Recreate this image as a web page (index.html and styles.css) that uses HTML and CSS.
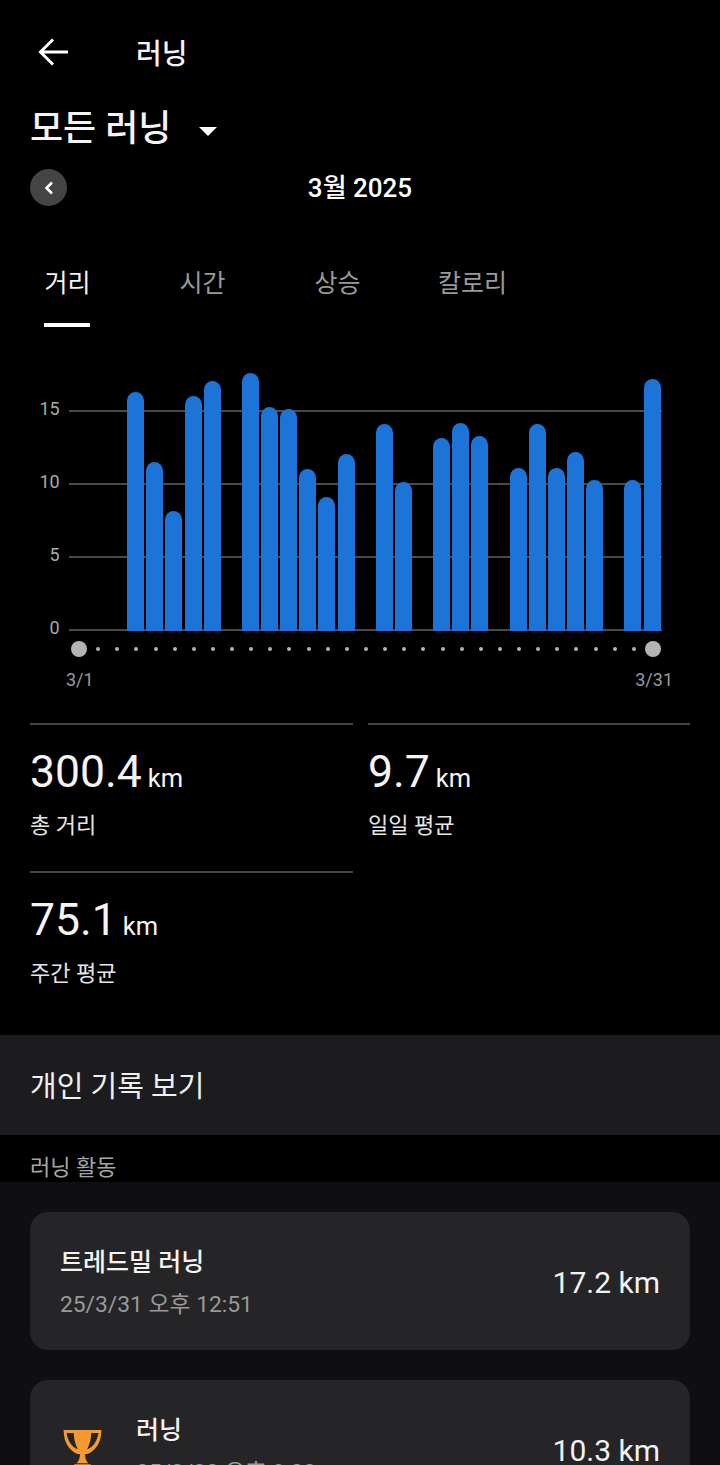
FILE: index.html
```html
<!DOCTYPE html>
<html lang="ko">
<head>
<meta charset="utf-8">
<title>러닝</title>
<link rel="stylesheet" href="styles.css">
</head>
<body>
<div class="screen">
  <header class="appbar">
    <svg class="back" viewBox="0 0 32 32" width="32" height="32"><path d="M32 16H4.500M17 3.500 4.500 16 17 28.500" fill="none" stroke="#fff" stroke-width="3"/></svg>
    <h1 class="appbar-title">러닝</h1>
  </header>
  <div class="filter">
    <span class="filter-text">모든 러닝</span>
    <span class="caret"></span>
  </div>
  <div class="date-row">
    <span class="prev"><svg viewBox="0 0 12 16" width="12" height="16"><path d="M9 2.500 3.500 8 9 13.500" fill="none" stroke="#fff" stroke-width="2.600"/></svg></span>
    <span class="date">3월 2025</span>
  </div>
  <nav class="tabs">
    <span class="tab active">거리</span>
    <span class="tab">시간</span>
    <span class="tab">상승</span>
    <span class="tab">칼로리</span>
  </nav>

  <section class="chart">
    <div class="plot">
      <div class="gridlines">
        <div class="gl"><span>15</span></div>
        <div class="gl"><span>10</span></div>
        <div class="gl"><span>5</span></div>
        <div class="gl"><span>0</span></div>
      </div>
      <div class="bars">
        <i></i><i></i><i></i>
        <b style="height:239px"></b>
        <b style="height:169px"></b>
        <b style="height:120px"></b>
        <b style="height:235px"></b>
        <b style="height:250px"></b>
        <i></i>
        <b style="height:258px"></b>
        <b style="height:224px"></b>
        <b style="height:222px"></b>
        <b style="height:162px"></b>
        <b style="height:134px"></b>
        <b style="height:177px"></b>
        <i></i>
        <b style="height:207px"></b>
        <b style="height:149px"></b>
        <i></i>
        <b style="height:193px"></b>
        <b style="height:208px"></b>
        <b style="height:195px"></b>
        <i></i>
        <b style="height:163px"></b>
        <b style="height:207px"></b>
        <b style="height:163px"></b>
        <b style="height:179px"></b>
        <b style="height:151px"></b>
        <i></i>
        <b style="height:151px"></b>
        <b style="height:252px"></b>
      </div>
    </div>
    <div class="dots">
      <u class="big"></u><u></u><u></u><u></u><u></u><u></u><u></u><u></u><u></u><u></u><u></u><u></u><u></u><u></u><u></u><u></u><u></u><u></u><u></u><u></u><u></u><u></u><u></u><u></u><u></u><u></u><u></u><u></u><u></u><u></u><u class="big"></u>
    </div>
    <div class="range"><span>3/1</span><span>3/31</span></div>
  </section>

  <section class="stats">
    <div class="stat">
      <div class="stat-value"><span class="num">300.4</span><span class="unit">km</span></div>
      <div class="stat-label">총 거리</div>
    </div>
    <div class="stat">
      <div class="stat-value"><span class="num">9.7</span><span class="unit">km</span></div>
      <div class="stat-label">일일 평균</div>
    </div>
    <div class="stat">
      <div class="stat-value"><span class="num">75.1</span><span class="unit">km</span></div>
      <div class="stat-label">주간 평균</div>
    </div>
  </section>

  <div class="records">개인 기록 보기</div>
  <div class="section-title">러닝 활동</div>

  <section class="list">
    <article class="card">
      <div class="card-main">
        <div class="card-title">트레드밀 러닝</div>
        <div class="card-sub">25/3/31 오후 12:51</div>
      </div>
      <div class="card-value">17.2 km</div>
    </article>
    <article class="card">
      <svg class="trophy" viewBox="0 0 38 40" width="39" height="41">
        <path d="M.5 1h37l-.5 5C36 15 31 21 24 24.500H14C7 21 2 15 1 6z" fill="#f59a33"/>
        <path d="M3.500 3.800h7c0 6 1.500 11 4 16C8 17 4.500 11 3.500 3.800zM34.500 3.800h-7c0 6-1.500 11-4 16C30 17 33.500 11 34.500 3.800z" fill="#252527"/>
        <path d="M16.500 24h5c0 5 1 7.500 3.500 9.500H13c2.500-2 3.500-4.500 3.500-9.500zM11 34.500h16V40H11z" fill="#f59a33"/>
      </svg>
      <div class="card-main">
        <div class="card-title">러닝</div>
        <div class="card-sub">25/3/30 오후 9:00</div>
      </div>
      <div class="card-value">10.3 km</div>
    </article>
  </section>
</div>
</body>
</html>
```
FILE: styles.css
```css
* { box-sizing: border-box; }
html, body { margin: 0; padding: 0; background: #000; }
body { font-family: Roboto, "Noto Sans CJK KR", sans-serif; color: #fff; }
.screen { width: 720px; height: 1465px; overflow: hidden; background: #000; }

.appbar { height: 104px; display: flex; align-items: center; padding: 0 0 0 36px; gap: 68px; }
.back { display: block; }
.appbar-title { margin: 0; padding-top: 6px; font-size: 28px; line-height: 36px; font-weight: 500; color: #f4f4f4; }

.filter { height: 46px; display: flex; align-items: center; padding-left: 30px; }
.filter-text { padding-top: 4px; font-size: 36px; line-height: 46px; font-weight: 500; color: #f4f4f4; }
.caret { margin-left: 28px; margin-top: 8px; width: 0; height: 0; border-left: 9px solid transparent; border-right: 9px solid transparent; border-top: 9px solid #fff; }

.date-row { margin-top: 19px; height: 37px; padding-left: 30px; display: flex; align-items: center; position: relative; }
.prev { width: 37px; height: 37px; border-radius: 50%; background: #444; display: flex; align-items: center; justify-content: center; }
.date { position: absolute; left: 0; right: 0; padding-top: 1px; text-align: center; font-size: 26px; font-weight: 500; line-height: 37px; }

.tabs { margin-top: 53px; display: grid; grid-template-columns: repeat(4, 135px); height: 68px; }
.tab { text-align: center; font-size: 25px; line-height: 46px; color: #9a9a9a; padding-top: 2px; position: relative; }
.tab.active { color: #f4f4f4; }
.tab.active::after { content: ""; position: absolute; left: 44px; width: 46px; bottom: 0; height: 4px; background: #fff; }

.chart { margin-top: 46px; }
.plot { position: relative; height: 258px; margin-left: 68.700px; width: 593px; }
.gridlines { position: absolute; left: 0; right: 0; bottom: 0; height: 221px; display: flex; flex-direction: column; justify-content: space-between; }
.gl { height: 2px; background: #4a4a4a; position: relative; }
.gl span { position: absolute; right: 100%; margin-right: 9px; top: -13px; font-size: 18px; line-height: 24px; color: #aaa; }
.bars { position: absolute; inset: 0; display: grid; grid-template-columns: repeat(31, 1fr); align-items: end; }
.bars b { display: block; width: 17px; justify-self: center; background: #1c74d9; border-radius: 9px 9px 0 0; }
.dots { margin: 9px 0 0 69.500px; width: 593px; height: 18px; display: grid; grid-template-columns: repeat(31, 1fr); align-items: center; justify-items: center; }
.dots u { display: block; width: 4px; height: 4px; border-radius: 50%; background: #b4b4b4; }
.dots u.big { width: 16px; height: 16px; }
.range { margin-top: 10px; display: flex; justify-content: space-between; padding: 0 47px 0 66px; font-size: 18px; line-height: 24px; color: #999; }

.stats { margin-top: 31px; padding: 0 30px; display: grid; grid-template-columns: 323px 322px; column-gap: 15px; grid-auto-rows: 148px; }
.stat { border-top: 2px solid #444; padding-top: 17px; }
.stat-value { display: flex; align-items: baseline; height: 60px; line-height: 60px; color: #f4f4f4; }
.num { font-size: 44.500px; font-weight: 400; }
.unit { font-size: 25.500px; margin-left: 6px; }
.stat-label { margin-top: 9px; font-size: 22px; line-height: 30px; color: #e6e6e6; }

.records { margin-top: 16px; height: 100px; background: #1c1c1e; padding-left: 30px; font-size: 29px; line-height: 104px; color: #f0f0f0; overflow: hidden; }
.section-title { height: 47px; padding: 18px 0 0 30px; font-size: 22px; line-height: 30px; color: #a6a6a6; overflow: hidden; }

.list { background: #0f0f11; padding: 30px 30px 0; display: flex; flex-direction: column; gap: 30px; height: 400px; }
.card { flex: none; height: 138px; background: #252527; border-radius: 18px; display: flex; align-items: center; padding: 0 30px; }
.card-main { flex: 1; padding-top: 4px; }
.card-title { font-size: 25px; line-height: 34px; font-weight: 500; color: #f4f4f4; }
.card-sub { margin-top: 9px; font-size: 22.800px; line-height: 32px; color: #999; }
.card-value { padding-top: 4px; font-size: 30px; line-height: 40px; color: #f2f2f2; }
.trophy { flex: none; margin: 0 34px 0 3px; }
```
